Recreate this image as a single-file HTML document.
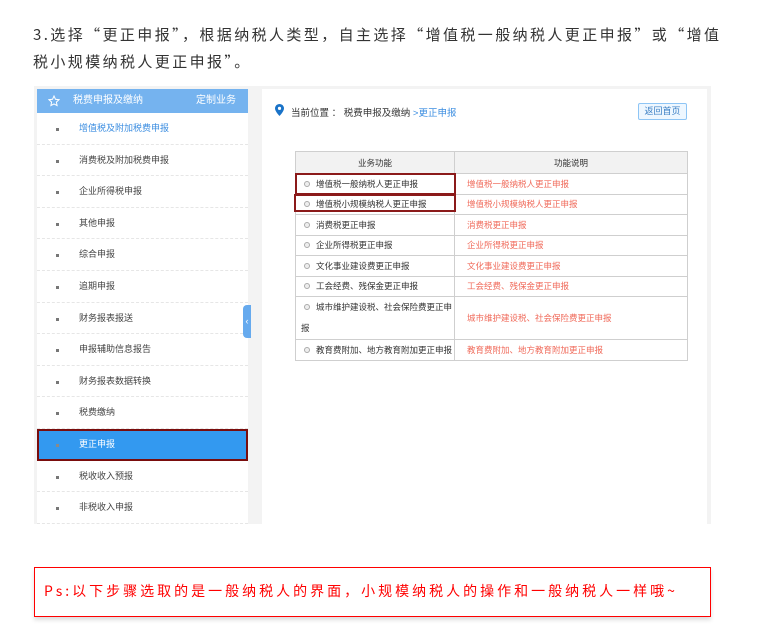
<!DOCTYPE html>
<html><head><meta charset="utf-8"><style>
*{margin:0;padding:0;box-sizing:border-box}
body{width:761px;height:635px;background:#fff;font-family:"Liberation Sans","Noto Sans CJK SC",sans-serif;position:relative;overflow:hidden;color:#333}
.intro{position:absolute;left:33px;top:21px;width:720px;font-family:"WenQuanYi Zen Hei","Noto Sans CJK SC",sans-serif;font-size:15px;letter-spacing:2.4px;line-height:27px;color:#333}
.shot{position:absolute;left:34px;top:86px;width:677px;height:438px;background:#f3f3f3}
.side{position:absolute;left:3px;top:3px;width:211px;height:435px;background:#fff}
.sh{height:24px;background:#75b3ef;color:#fff;font-size:10px;line-height:24px;position:relative}
.sh .t{position:absolute;left:36px}.sh .rt{position:absolute;right:12px}
.sh svg{position:absolute;left:11px;top:6px}
.it{height:31.6px;border-bottom:1px dashed #e6e6e6;font-size:9px;line-height:31px;padding-left:42px;position:relative;color:#444}
.it:before{content:"";position:absolute;left:19px;top:15px;width:3px;height:3px;background:#777}
.it.b{color:#3b8de0}
.it.a{background:#3399f0;color:#fff;border:2px solid #7a0d0d;line-height:27px;padding-left:40px}
.it.a:before{left:17px;top:13px;background:#8a8a8a}
.tab{position:absolute;left:206px;top:216px;width:8px;height:33px;background:#66aaee;border-radius:4px 0 0 4px;color:#fff;font-size:9px;line-height:33px;text-align:center}
.main{position:absolute;left:228px;top:3px;width:445px;height:435px;background:#fff}
.loc{position:absolute;left:29px;top:16px;font-size:9.5px;color:#333}
.loc span{color:#3b8de0}
.pin{position:absolute;left:13px;top:15px}
.btn{position:absolute;left:376px;top:14px;width:49px;height:17px;border:1px solid #8ec5f5;border-radius:2px;background:#eef7ff;color:#3b7fc4;font-size:9px;text-align:center;line-height:15px}
table{position:absolute;left:33px;top:62px;width:393px;border-collapse:collapse;font-size:8.5px;table-layout:fixed}
td,th{border:1px solid #cfcfcf;height:20.5px;font-weight:normal;vertical-align:middle;white-space:nowrap;overflow:hidden}
th{background:#f2f2f2;height:22px;color:#333}
td:first-child,th:first-child{width:159px}
td:first-child{padding-left:8px;color:#333}
td:last-child{padding-left:12px;color:#f06a5a}
.rd{display:inline-block;width:6px;height:6px;border-radius:50%;border:1px solid #aaa;background:#eee;margin-right:6px;vertical-align:0}
.hl{position:absolute;border:2px solid #8b1a1a}
.ps{position:absolute;left:34px;top:567px;width:677px;height:50px;border:1px solid #f00;box-shadow:0 3px 4px #ddd;color:#f00;font-family:"WenQuanYi Zen Hei","Noto Sans CJK SC",sans-serif;font-size:14px;letter-spacing:3px;line-height:46px;padding-left:9px;white-space:nowrap}
</style></head><body>
<div class="intro">3.选择“更正申报”，根据纳税人类型，自主选择“增值税一般纳税人更正申报”或“增值<br>税小规模纳税人更正申报”。</div>
<div class="shot">
<div class="side">
<div class="sh"><svg width="12" height="12" viewBox="0 0 12 12"><path d="M6 1l1.5 3.3 3.5.4-2.6 2.4.7 3.5L6 8.9 2.9 10.6l.7-3.5L1 4.7l3.5-.4z" fill="none" stroke="#fff" stroke-width="1"/></svg><span class="t">税费申报及缴纳</span><span class="rt">定制业务</span></div>
<div class="it b">增值税及附加税费申报</div>
<div class="it">消费税及附加税费申报</div>
<div class="it">企业所得税申报</div>
<div class="it">其他申报</div>
<div class="it">综合申报</div>
<div class="it">追期申报</div>
<div class="it">财务报表报送</div>
<div class="it">申报辅助信息报告</div>
<div class="it">财务报表数据转换</div>
<div class="it">税费缴纳</div>
<div class="it a">更正申报</div>
<div class="it">税收收入预报</div>
<div class="it">非税收入申报</div>
<div class="tab">‹</div>
</div>
<div class="main">
<svg class="pin" width="9" height="12" viewBox="0 0 9 12"><path d="M4.5 0C2 0 0 2 0 4.4 0 7.5 4.5 12 4.5 12S9 7.5 9 4.4C9 2 7 0 4.5 0z" fill="#1a73c8"/><circle cx="4.5" cy="4.4" r="1.6" fill="#fff"/></svg>
<div class="loc">当前位置 ： 税费申报及缴纳 <span>&gt;更正申报</span></div>
<div class="btn">返回首页</div>
<table>
<tr><th>业务功能</th><th>功能说明</th></tr>
<tr><td><i class="rd"></i>增值税一般纳税人更正申报</td><td>增值税一般纳税人更正申报</td></tr>
<tr><td><i class="rd"></i>增值税小规模纳税人更正申报</td><td>增值税小规模纳税人更正申报</td></tr>
<tr><td><i class="rd"></i>消费税更正申报</td><td>消费税更正申报</td></tr>
<tr><td><i class="rd"></i>企业所得税更正申报</td><td>企业所得税更正申报</td></tr>
<tr><td><i class="rd"></i>文化事业建设费更正申报</td><td>文化事业建设费更正申报</td></tr>
<tr><td><i class="rd"></i>工会经费、残保金更正申报</td><td>工会经费、残保金更正申报</td></tr>
<tr><td style="height:41px;line-height:21px;padding-left:5px"><i class="rd" style="margin-left:3px"></i>城市维护建设税、社会保险费更正申<br>报</td><td>城市维护建设税、社会保险费更正申报</td></tr>
<tr><td><i class="rd"></i>教育费附加、地方教育附加更正申报</td><td>教育费附加、地方教育附加更正申报</td></tr>
</table>
<div class="hl" style="left:33px;top:84px;width:161px;height:22px"></div>
<div class="hl" style="left:32px;top:105px;width:162px;height:18px"></div>
</div>
</div>
<div class="ps">Ps:以下步骤选取的是一般纳税人的界面，小规模纳税人的操作和一般纳税人一样哦~</div>
</body></html>
